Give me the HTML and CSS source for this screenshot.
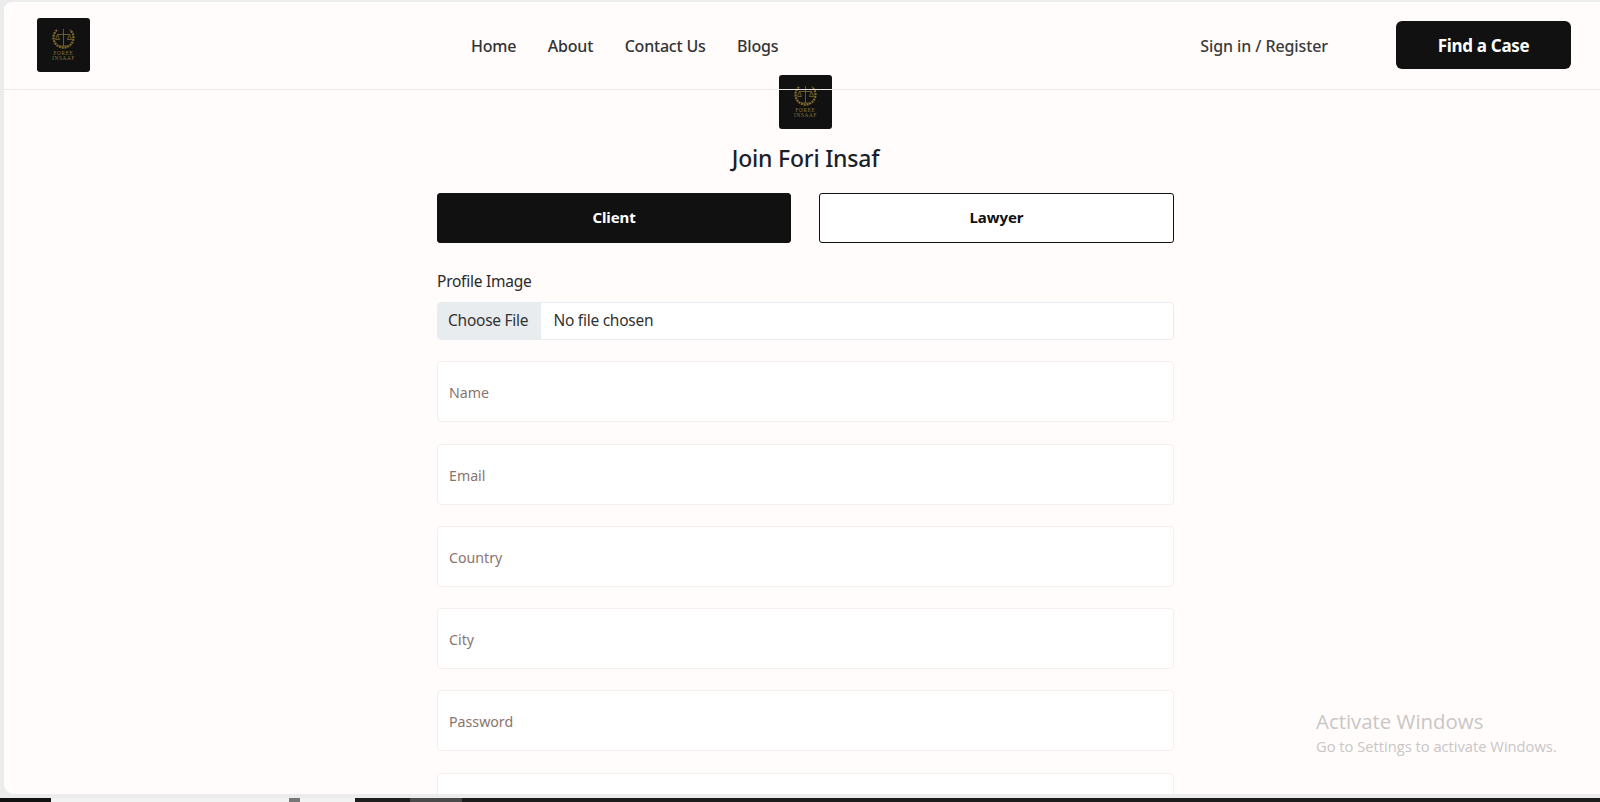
FILE: index.html
```html
<!DOCTYPE html>
<html lang="en">
<head>
<meta charset="utf-8">
<title>Join Fori Insaf</title>
<link rel="stylesheet" href="styles.css">
</head>
<body>
<div class="screen">
  <div class="window">
    <header class="nav">
      <svg class="logo" viewBox="0 0 53 54">
        <rect width="53" height="54" rx="3" fill="#111"/>
        <g fill="none" stroke="#7f6c2c">
          <path d="M20 12a10 10 0 1 0 13 0" stroke-width="2.2" stroke-dasharray="2 .8"/>
          <path d="M26.5 11v17M20 16.500h13M20.500 16.500l-2 5h4zM32.500 16.500l-2 5h4zM22 28h9" stroke-width=".8"/>
        </g>
        <text class="logo-text" x="26.500" y="37">FOREE</text>
        <text class="logo-text" x="26.500" y="42">INSAAF</text>
      </svg>
      <nav class="links">
        <a>Home</a><a>About</a><a>Contact Us</a><a>Blogs</a>
      </nav>
      <div class="actions">
        <a class="signin">Sign in / Register</a>
        <a class="find">Find a Case</a>
      </div>
    </header>
    <main class="page">
      <svg class="logo logo-main" viewBox="0 0 53 54">
        <rect width="53" height="54" rx="3" fill="#111"/>
        <g fill="none" stroke="#7f6c2c">
          <path d="M20 12a10 10 0 1 0 13 0" stroke-width="2.2" stroke-dasharray="2 .8"/>
          <path d="M26.5 11v17M20 16.500h13M20.500 16.500l-2 5h4zM32.500 16.500l-2 5h4zM22 28h9" stroke-width=".8"/>
        </g>
        <text class="logo-text" x="26.500" y="37">FOREE</text>
        <text class="logo-text" x="26.500" y="42">INSAAF</text>
      </svg>
      <h1 class="title">Join Fori Insaf</h1>
      <div class="tabs">
        <button class="tab tab-on">Client</button>
        <button class="tab">Lawyer</button>
      </div>
      <label class="file-label">Profile Image</label>
      <div class="file">
        <span class="file-btn">Choose File</span>
        <span class="file-name">No file chosen</span>
      </div>
      <div class="field">Name</div>
      <div class="field">Email</div>
      <div class="field">Country</div>
      <div class="field">City</div>
      <div class="field">Password</div>
      <div class="field"></div>
    </main>
    <div class="activate">
      <div class="activate-title">Activate Windows</div>
      <div class="activate-sub">Go to Settings to activate Windows.</div>
    </div>
  </div>
  <div class="taskbar">
    <span class="seg seg-black"></span>
    <span class="seg seg-white"><i class="speck"></i></span>
    <span class="seg seg-dark"></span>
    <span class="seg seg-grey"></span>
    <span class="seg seg-rest"></span>
  </div>
</div>
</body>
</html>
```
FILE: styles.css
```css
* { box-sizing: border-box; }
html, body { margin: 0; height: 100%; overflow: hidden; }
body {
  font-family: "Noto Sans", "Open Sans", sans-serif;
  color: #212529;
  background: #ececec;
}
.screen {
  height: 802px;
  display: flex;
  flex-direction: column;
  padding-top: 2px;
}
.window {
  position: relative;
  flex: 1;
  margin: 0 0 4px 4px;
  min-height: 0;
  overflow: hidden;
  background: #fffcfb;
  border-radius: 8px 0 0 10px;
}
.nav {
  position: relative;
  z-index: 1;
  height: 88px;
  display: flex;
  align-items: center;
  padding: 0 29px 2px 33px;
  border-bottom: 1px solid #ece8e8;
}
.logo { display: block; width: 53px; height: 54px; flex: none; }
.logo-text {
  font-family: "Liberation Serif", serif;
  font-size: 5.2px;
  letter-spacing: .7px;
  fill: #85753c;
  text-anchor: middle;
}
.links {
  display: flex;
  gap: 31.500px;
  margin-left: 381px;
  padding-top: 2px;
  font-size: 16px;
  font-weight: 500;
  letter-spacing: -.2px;
  color: #333;
}
.actions {
  display: flex;
  align-items: center;
  margin-left: auto;
  padding-top: 1px;
}
.signin { font-size: 16px; font-weight: 500; letter-spacing: -.1px; color: #3a3a3a; margin-right: 68px; padding-top: 1px; }
.find {
  width: 175px;
  height: 48px;
  display: flex;
  align-items: center;
  justify-content: center;
  padding-top: 2px;
  border-radius: 6px;
  background: #111;
  color: #fff;
  font-size: 17px;
  font-weight: 700;
  letter-spacing: -.3px;
  margin-top: -1px;
}
.page {
  width: 737px;
  margin: -15px 0 0 433px;
  display: flex;
  flex-direction: column;
}
.logo-main { align-self: center; margin-left: -1px; }
.title {
  margin: 14px 0 0;
  text-align: center;
  font-size: 23px;
  line-height: 30px;
  font-weight: 500;
  letter-spacing: -.2px;
  color: #1a1f2b;
}
.tabs {
  display: grid;
  grid-template-columns: 354px 1fr;
  gap: 28px;
  margin-top: 20px;
}
.tab {
  height: 50px;
  padding-bottom: 3px;
  border: 1px solid #111;
  border-radius: 3px;
  background: #fff;
  color: #111;
  font: 700 15px "Noto Sans", sans-serif;
  letter-spacing: -.1px;
}
.tab-on { background: #111; color: #fff; }
.file-label {
  margin-top: 27px;
  font-size: 15.500px;
  letter-spacing: -.25px;
  line-height: 22px;
  color: #2a2a2a;
}
.file {
  display: flex;
  align-items: center;
  height: 38px;
  margin-top: 10px;
  overflow: hidden;
  background: #fff;
  border: 1px solid #e9ecef;
  border-radius: 4px;
  font-size: 15.500px;
  letter-spacing: -.25px;
}
.file-btn {
  height: 100%;
  display: flex;
  align-items: center;
  padding: 0 13px 2px 10px;
  background: #e9ecef;
  color: #333;
}
.file-name { margin-left: 12px; padding-bottom: 2px; color: #333; }
.field {
  height: 61px;
  flex: none;
  display: flex;
  align-items: center;
  margin-top: 21.300px;
  padding: 2px 11px 0;
  background: #fff;
  border: 1px solid #f6eeec;
  border-radius: 4px;
  font-size: 14.200px;
  color: #8a7470;
}
.activate {
  position: absolute;
  left: 1312px;
  top: 706px;
  color: #c9c6c5;
  font-family: "Open Sans", sans-serif;
}
.activate-title { font-size: 20.400px; line-height: 27px; }
.activate-sub { font-size: 14.700px; line-height: 22px; }
.taskbar { height: 4px; flex: none; display: flex; background: #1c1c1c; }
.seg { display: block; height: 100%; }
.seg-black { width: 51px; background: #111; }
.seg-white { width: 304px; background: #f2f2f2; display: flex; padding-left: 238px; }
.speck { display: block; width: 11px; height: 4px; background: #777; }
.seg-dark { width: 55px; background: #1e1e1e; }
.seg-grey { width: 52px; background: #4a4a4a; }
.seg-rest { flex: 1; }
```
